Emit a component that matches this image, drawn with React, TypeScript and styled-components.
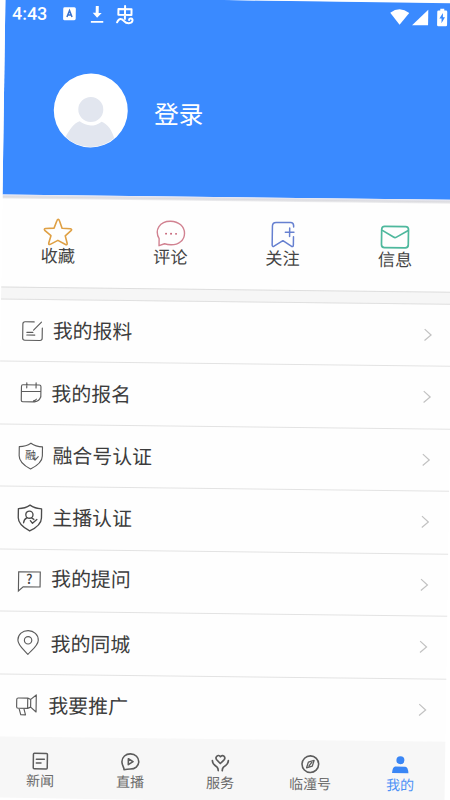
import React from "react";
import styled, { createGlobalStyle } from "styled-components";

const GlobalStyle = createGlobalStyle`
  body {
    margin: 0;
    background: #fff;
    overflow: hidden;
    font-family: "Noto Sans CJK SC", sans-serif;
  }
  svg { display: block; flex: none; overflow: visible; }
`;

const Frame = styled.div`
  width: 450px;
  height: 800px;
  overflow: hidden;
  clip-path: polygon(5.4px 0, 228px 0, 450px 3.3px, 450px 430px, 444.5px 800px, 150px 800px, 0 797.6px, 0 362px);
`;

const Screen = styled.div`
  width: 460px;
  height: 806px;
  display: flex;
  flex-direction: column;
  background: #fefefe;
  transform-origin: 0 0;
  transform: matrix(1, 0.0115, -0.0145, 1, 5.4, -2.5);
`;

const Header = styled.header`
  height: 197.4px;
  flex: none;
  background: #3a8aff;
  color: #fff;
`;

const StatusBar = styled.div`
  display: flex;
  align-items: center;
  height: 31px;
  width: 442px;
  box-sizing: border-box;
  padding-left: 7px;
`;

const Clock = styled.span`
  font: 500 17.8px/20px Roboto, sans-serif;
  width: 37.5px;
`;

const StatusLeft = styled.div`
  display: flex;
  align-items: center;
  gap: 13.5px;
  flex: 1;
`;

const StatusRight = styled.div`
  display: flex;
  align-items: center;
  gap: 3px;
  padding-bottom: 2px;
`;

const Profile = styled.div`
  display: flex;
  align-items: center;
  height: 74px;
  padding: 44.4px 0 0 50.3px;
`;

const LoginText = styled.span`
  font-size: 24.7px;
  line-height: 30px;
  margin: 1.5px 0 0 26px;
`;

const Shade = styled.div`
  height: 4px;
  flex: none;
  background: linear-gradient(#e9e9f5, #dcdce0 55%, #ededef);
`;

const QuickBar = styled.nav`
  display: grid;
  grid-template-columns: repeat(4, 112.4px);
  height: 87.7px;
  flex: none;
`;

const QuickItem = styled.div`
  display: flex;
  flex-direction: column;
  align-items: center;
  padding-top: 17.6px;
`;

const QuickLabel = styled.span`
  font-size: 17.2px;
  line-height: 20px;
  margin-top: -2.3px;
  color: #444;
`;

const Band = styled.div`
  height: 12.5px;
  flex: none;
  box-sizing: border-box;
  background: #f6f6f6;
  border-top: 1px solid #dedede;
  border-bottom: 1px solid #e0e0e0;
`;

const List = styled.main`
  flex: none;
`;

const Row = styled.div`
  display: flex;
  align-items: center;
  height: 62.5px;
  box-sizing: border-box;
  border-bottom: 1px solid #e3e3e3;
  padding-left: 17px;
  &:last-child { border-bottom-color: transparent; }
`;

const IconSlot = styled.span`
  width: 28px;
  display: flex;
  justify-content: center;
  box-sizing: border-box;
  padding: 0.6px 0 0 1px;
`;

const RowLabel = styled.span<{ $inset: number; $lift: number }>`
  font-size: 19.9px;
  line-height: 26px;
  color: #3c3c3c;
  width: 378px;
  box-sizing: border-box;
  padding-left: ${(p) => p.$inset}px;
  padding-bottom: ${(p) => p.$lift * 2}px;
`;

const TabBar = styled.nav`
  display: grid;
  grid-template-columns: repeat(5, 90px);
  padding-left: 1px;
  flex: 1;
  background: #f7f7f7;
`;

const Tab = styled.div<{ $active?: boolean }>`
  display: flex;
  flex-direction: column;
  align-items: center;
  padding-top: 13.5px;
  color: ${(p) => (p.$active ? "#3a86f5" : "#5c5c5c")};
`;

const TabLabel = styled.span`
  font-size: 14px;
  line-height: 18px;
  opacity: 0.9;
`;

const IconText = styled.text`
  font-family: "Noto Sans CJK SC", sans-serif;
  text-anchor: middle;
  stroke: none;
`;

type LineProps = { w?: number; color?: string; stroke?: number; children: React.ReactNode };
const Line = ({ w = 26, color = "#5c5c5c", stroke = 1.15, children }: LineProps) => (
  <svg width={w} height={w} viewBox={`0 0 ${w} ${w}`} fill="none" stroke={color} strokeWidth={stroke} strokeLinecap="round" strokeLinejoin="round">
    {children}
  </svg>
);

const Avatar = () => (
  <svg width="74" height="74" viewBox="0 0 74 74">
    <defs><clipPath id="face"><circle cx="37" cy="37" r="36.4" /></clipPath></defs>
    <circle cx="37" cy="37" r="37" fill="#fff" />
    <g fill="#e2e6ef" clipPath="url(#face)">
      <circle cx="37" cy="36" r="12.5" />
      <path d="M12 64C16 57 20 50 26 48Q37 56 48 48C54 50 59 57 61 65V74H12Z" />
    </g>
  </svg>
);

const quick = [
  {
    label: "收藏",
    icon: (
      <Line w={30} color="#dfa044" stroke={1.6}>
        <path d="M15 2.2Q15.8 2.2 16.2 3.4L19 11L27.4 11.5Q29.4 11.8 28 13.3L22.3 18.6L24.3 26Q24.5 28 22.7 27.3L15 23.2L7.4 27.3Q5.6 28 5.9 26L8 18.6L1.7 13.3Q.6 11.8 2.6 11.5L11 11L13.8 3.4Q14.2 2.2 15 2.2Z" />
      </Line>
    ),
  },
  {
    label: "评论",
    icon: (
      <Line w={30} color="#d18291" stroke={1.4}>
        <path d="M3.2 27.4V20.3C-2 11.5 3.7 2.8 14.4 2.8C22.7 2.8 28.5 8 28.5 14.8C28.5 21.8 22.7 26.3 15.2 26.3Q11.7 26.3 8.7 25.4Z" />
        <path d="M10 15.3h.1M15 15.3h.1M20 15.3h.1" stroke="#c45d72" strokeWidth="1.8" />
      </Line>
    ),
  },
  {
    label: "关注",
    icon: (
      <Line w={30} color="#6680d0" stroke={1.5}>
        <path d="M25.5 7.2V5.8Q25.2 2.8 22.5 2.8H8Q4.3 2.8 4.3 6.5V25.5Q4.6 27.4 6.2 26.6L15 21L23.8 26.6Q25.5 27.2 25.5 25.2V16.8M17.3 12.5h8.6M21.6 8.2v8.6" />
      </Line>
    ),
  },
  {
    label: "信息",
    icon: (
      <Line w={30} color="#4eb89d" stroke={1.7}>
        <rect x="1.6" y="5.4" width="26.8" height="21.3" rx="3" />
        <path d="M2.3 9.5L13.5 16.1Q15 17 16.5 16.1L27.7 9.5" />
      </Line>
    ),
  },
];

const shield = <path d="M13 0.3Q17.8 3.7 24.6 3.9V13C24.6 18.8 19 23.1 13 26.1C7 23.1 1.4 18.8 1.4 13V3.9Q8.2 3.7 13 .3Z" />;

const rows = [
  {
    label: "我的报料", inset: 7.2, lift: 0,
    icon: <Line><path d="M14.5 4H5.4Q3.2 4 3.2 6.2V20.3Q3.2 22.5 5.4 22.5H20.5Q22.7 22.5 22.7 20.3V10M14 12.2L21.8 4.2M7.3 14.5h6M7.3 17.2h8" /></Line>,
  },
  {
    label: "我的报名", inset: 6.8, lift: 0,
    icon: <Line><path d="M22.2 17V6.7Q22.2 5 20.5 5H4.1Q2.7 5 2.7 6.7V20.6Q2.7 22 4.1 22H16Q21 21.5 22.2 16.5M2.7 11.5H22.2M8 3v5M17.3 3v5M15 21Q17 20.5 17.8 19.3" /></Line>,
  },
  {
    label: "融合号认证", inset: 8.8, lift: 0,
    icon: <Line>{shield}<IconText x="12.8" y="16.2" fontSize="11" fontWeight="400" fill="#4c4c4c">融</IconText><path d="M15.3 15.4L17.3 17.2L20.5 13.7" /></Line>,
  },
  {
    label: "主播认证", inset: 9.5, lift: 1,
    icon: <Line stroke={1.35} color="#4c4c4c">{shield}<circle cx="12.5" cy="9.8" r="3.6" /><path d="M6.8 18Q7 14.5 10.2 12.8M13.5 15.8L15.7 18.3L20 14.5M14.5 12.8L17 14.5" /></Line>,
  },
  {
    label: "我的提问", inset: 9.2, lift: 2.4,
    icon: <Line><path d="M2.6 4H24.2V19H7.3L2.6 23.2Z" strokeLinejoin="miter" /><IconText x="13.4" y="16" fontSize="13" fontWeight="500" fill="#444">?</IconText></Line>,
  },
  {
    label: "我的同城", inset: 9.6, lift: 0,
    icon: <Line><path d="M13 24.5C9 20 2.8 15.5 2.8 10.2C2.8 4.5 7.4.8 13 .8S23.2 4.5 23.2 10.2C23.2 15.5 17 20 13 24.5Z" /><circle cx="13" cy="10.4" r="3.7" /></Line>,
  },
  {
    label: "我要推广", inset: 8.2, lift: 0,
    icon: <Line><path d="M13.5 5.2H4Q2.5 5.2 2.5 6.8V14Q2.5 15.5 4 15.5H13.5ZM13.5 5.2L16.5 6.5V14.2L13.5 15.5M16.5 6.5L22 2V19L16.5 14.2M5 15.8L6.8 22H11.5L9.8 15.8" /></Line>,
  },
];

const tabs = [
  { label: "新闻", icon: <Line w={20} color="currentColor" stroke={1.5}><rect x="3" y="2.3" width="14" height="15.5" rx="1" /><path d="M6 8.2h8M6 12h4.7" /></Line> },
  { label: "直播", icon: <Line w={20} color="currentColor" stroke={1.6}><path d="M3.8 17.7C4 15.5 1.5 13.5 1.6 9.6C1.7 5 5.2 1.8 10 1.8C15 1.8 18.4 5.3 18.4 9.6C18.4 14 14.8 17 10 17Q7 17.2 3.8 17.7Z" /><path d="M8 6.7V12.6L12.7 9.6Z" /></Line> },
  { label: "服务", icon: <Line w={20} color="currentColor" stroke={1.7}><path d="M10 10.4L6.3 6.7C4.2 3.8 7.8.7 10 3.6C12.2.7 15.8 3.8 13.7 6.7ZM2 7.5Q2.2 10.5 4.5 12.2L6.8 14Q8 15.2 8 17.5M18 7.5Q17.8 10.5 15.5 12.2L13.2 14Q12 15.2 12 17.5" /></Line> },
  { label: "临潼号", icon: <Line w={20} color="currentColor" stroke={1.6}><circle cx="10" cy="10" r="8.3" /><path d="M8 8L13.7 6.3L12 12L6.3 13.7ZM8.7 11.8L11.4 8.3" strokeWidth="1.3" /></Line> },
  { label: "我的", active: true, icon: <Line w={20} color="currentColor" stroke={0}><g fill="currentColor"><circle cx="10" cy="5" r="4" /><path d="M1.8 18Q2.2 11.8 5 11.5H15Q17.8 11.8 18.2 18Z" /></g></Line> },
];

export default function App() {
  return (
    <>
      <GlobalStyle />
      <Frame>
        <Screen>
          <Header>
            <StatusBar>
              <StatusLeft>
                <Clock>4:43</Clock>
                <svg width="13" height="13" viewBox="0 0 13 13">
                  <rect width="12.6" height="13" rx="1.5" fill="#fff" />
                  <path d="M3.8 9.8L6.3 3.4L8.9 9.8M4.8 7.8H8" fill="none" stroke="#3a72cc" strokeWidth="1.5" />
                </svg>
                <svg width="13" height="18" viewBox="-0.5 0 13 18" fill="#fff">
                  <path d="M5 .5H8V7.3H11L6.5 12.3L2 7.3H5ZM.3 15.4H12.7V17.2H.3Z" />
                </svg>
                <svg width="18" height="20" viewBox="0 0 18 20" fill="none" stroke="#fff" strokeWidth="2" strokeLinecap="round" strokeLinejoin="round">
                  <path d="M2.2 4.2H15.3V10H2.2ZM8.8 1V14M1 17.5C3 12.8 5.7 13.6 8 16.2C10.5 19.2 15.8 19 16.4 15.7C16.7 13 13 12.8 13 15" />
                </svg>
              </StatusLeft>
              <StatusRight>
                <svg width="19" height="16" viewBox="0 0 19 16"><path d="M0 3.8Q9.5-3.3 19 3.8L9.5 15.8Z" fill="#fff" /></svg>
                <svg width="16" height="16" viewBox="0 0 16 16"><path d="M16 .3V16H0Z" fill="#fff" /></svg>
                <svg width="16" height="18" viewBox="-6 0 16 18">
                  <path d="M3 .3H7V2H8.7Q10 2 10 3.3V16.5Q10 17.7 8.7 17.7H1.3Q0 17.7 0 16.5V3.3Q0 2 1.3 2H3Z" fill="#fff" />
                  <path d="M5.7 4.5L2.2 10H4.4V14.8L7.8 8.8H5.7Z" fill="#3a8aff" />
                </svg>
              </StatusRight>
            </StatusBar>
            <Profile>
              <Avatar />
              <LoginText>登录</LoginText>
            </Profile>
          </Header>
          <Shade />
          <QuickBar>
            {quick.map((q) => (
              <QuickItem key={q.label}>
                {q.icon}
                <QuickLabel>{q.label}</QuickLabel>
              </QuickItem>
            ))}
          </QuickBar>
          <Band />
          <List>
            {rows.map((r) => (
              <Row key={r.label}>
                <IconSlot>{r.icon}</IconSlot>
                <RowLabel $inset={r.inset} $lift={r.lift}>{r.label}</RowLabel>
                <svg width="9" height="13" viewBox="0 0 9 13" fill="none" stroke="#c2c2c2" strokeWidth="1.2">
                  <path d="M1 .8L7.5 6.5L1 12.2" />
                </svg>
              </Row>
            ))}
          </List>
          <TabBar>
            {tabs.map((t) => (
              <Tab key={t.label} $active={t.active}>
                {t.icon}
                <TabLabel>{t.label}</TabLabel>
              </Tab>
            ))}
          </TabBar>
        </Screen>
      </Frame>
    </>
  );
}
